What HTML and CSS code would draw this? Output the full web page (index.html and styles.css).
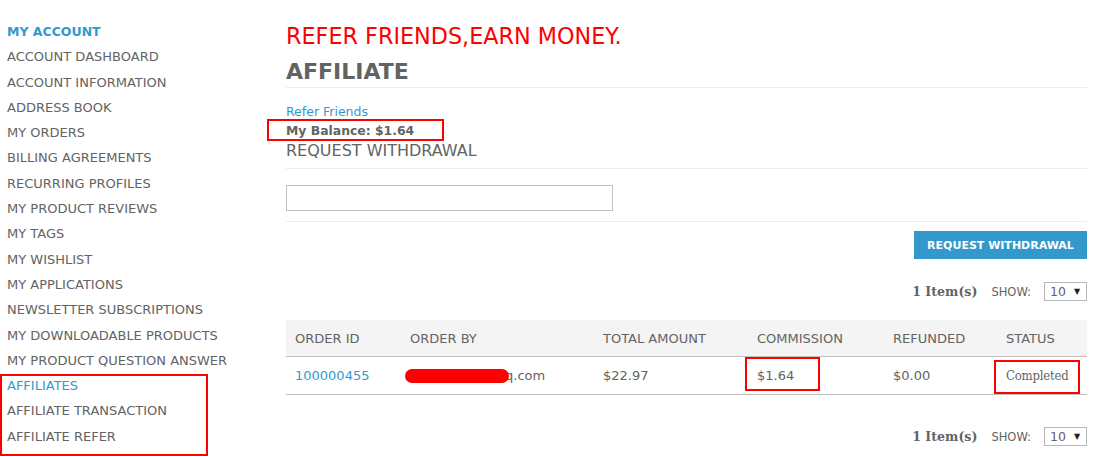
FILE: index.html
```html
<!DOCTYPE html>
<html>
<head>
<meta charset="utf-8">
<link rel="stylesheet" href="styles.css">
</head>
<body>
<div class="page">
  <aside class="sidebar">
    <div class="side-title">MY ACCOUNT</div>
    <ul class="side-nav">
      <li>ACCOUNT DASHBOARD</li>
      <li>ACCOUNT INFORMATION</li>
      <li>ADDRESS BOOK</li>
      <li>MY ORDERS</li>
      <li>BILLING AGREEMENTS</li>
      <li>RECURRING PROFILES</li>
      <li>MY PRODUCT REVIEWS</li>
      <li>MY TAGS</li>
      <li>MY WISHLIST</li>
      <li>MY APPLICATIONS</li>
      <li>NEWSLETTER SUBSCRIPTIONS</li>
      <li>MY DOWNLOADABLE PRODUCTS</li>
      <li>MY PRODUCT QUESTION ANSWER</li>
      <li class="current">AFFILIATES</li>
      <li>AFFILIATE TRANSACTION</li>
      <li>AFFILIATE REFER</li>
    </ul>
  </aside>
  <main class="main">
    <div class="promo">REFER FRIENDS,EARN MONEY.</div>
    <h1 class="page-title">AFFILIATE</h1>
    <a class="refer-link">Refer Friends</a>
    <div class="balance">My Balance: $1.64</div>
    <h2 class="section-title">REQUEST WITHDRAWAL</h2>
    <div class="form-row"><div class="text-input"></div></div>
    <div class="actions"><button class="btn">REQUEST WITHDRAWAL</button></div>
    <div class="toolbar toolbar-top">
      <span class="count">1 Item(s)</span>
      <span class="show">SHOW:</span>
      <span class="limiter">10 <span class="arrow">▼</span></span>
    </div>
    <table class="data">
      <colgroup>
        <col class="c1"><col class="c2"><col class="c3"><col class="c4"><col class="c5"><col class="c6">
      </colgroup>
      <thead>
        <tr><th>ORDER ID</th><th>ORDER BY</th><th>TOTAL AMOUNT</th><th>COMMISSION</th><th>REFUNDED</th><th>STATUS</th></tr>
      </thead>
      <tbody>
        <tr>
          <td><a class="link">100000455</a></td>
          <td class="email"><span class="redact"></span>q.com</td>
          <td>$22.97</td>
          <td>$1.64</td>
          <td>$0.00</td>
          <td class="status">Completed</td>
        </tr>
      </tbody>
    </table>
    <div class="toolbar toolbar-bottom">
      <span class="count">1 Item(s)</span>
      <span class="show">SHOW:</span>
      <span class="limiter">10 <span class="arrow">▼</span></span>
    </div>
  </main>
  <div class="mark mark-side"></div>
  <div class="mark mark-balance"></div>
  <div class="mark mark-commission"></div>
  <div class="mark mark-status"></div>
</div>
</body>
</html>
```

FILE: styles.css
```css
html, body {
  margin: 0;
  padding: 0;
  background: #ffffff;
}
body {
  font-family: "DejaVu Sans", Verdana, sans-serif;
  color: #636363;
  font-size: 13px;
}
.page {
  position: relative;
  display: flex;
  width: 1102px;
  height: 457px;
  overflow: hidden;
}
.sidebar {
  width: 279px;
  padding-left: 7px;
  padding-top: 19px;
  flex: none;
}
.side-title {
  font-weight: bold;
  font-size: 12.5px;
  color: #3399cc;
  line-height: 25.3px;
}
.side-nav {
  list-style: none;
  margin: 0;
  padding: 0;
}
.side-nav li {
  line-height: 25.3px;
  font-size: 13px;
  color: #636363;
  white-space: nowrap;
}
.side-nav li.current {
  color: #3399cc;
}
.main {
  width: 801px;
  flex: none;
  padding-top: 22px;
}
.promo {
  font-size: 22.3px;
  line-height: 28px;
  color: #ff0000;
  white-space: nowrap;
}
.page-title {
  margin: 8px 0 0;
  font-size: 22px;
  font-weight: bold;
  line-height: 28px;
  padding-bottom: 1px;
  border-bottom: 1px solid #ededed;
  color: #636363;
}
.refer-link {
  display: block;
  margin-top: 14px;
  line-height: 19px;
  font-size: 12.5px;
  color: #3399cc;
}
.balance {
  font-weight: bold;
  font-size: 12.4px;
  line-height: 19px;
}
.section-title {
  margin: 0;
  font-size: 16px;
  font-weight: normal;
  line-height: 22px;
  padding-bottom: 6px;
  border-bottom: 1px solid #ededed;
}
.form-row {
  padding-top: 16px;
  padding-bottom: 10px;
  border-bottom: 1px solid #ededed;
}
.text-input {
  width: 327px;
  height: 26px;
  box-sizing: border-box;
  border: 1px solid #c0c0c0;
  background: #fff;
}
.actions {
  display: flex;
  justify-content: flex-end;
  padding-top: 9px;
}
.btn {
  width: 173px;
  height: 28px;
  border: 0;
  background: #3399cc;
  color: #ffffff;
  font-family: "DejaVu Sans", Verdana, sans-serif;
  font-weight: bold;
  font-size: 11px;
  padding: 0;
}
.toolbar {
  display: flex;
  justify-content: flex-end;
  align-items: center;
  height: 19px;
}
.toolbar-top {
  margin-top: 23px;
}
.toolbar-bottom {
  margin-top: 32px;
}
.count {
  font-family: "DejaVu Serif", Georgia, serif;
  font-weight: bold;
  font-size: 12.6px;
  margin-right: 14px;
}
.show {
  font-size: 11.5px;
  margin-right: 13px;
}
.limiter {
  width: 43px;
  height: 19px;
  box-sizing: border-box;
  border: 1px solid #b8b8b8;
  font-size: 12.5px;
  line-height: 17px;
  padding-left: 5px;
  color: #636363;
  display: flex;
  align-items: center;
}
.arrow {
  font-size: 8px;
  color: #222;
  margin-left: 8px;
}
.data {
  margin-top: 19px;
  width: 801px;
  border-collapse: collapse;
  table-layout: fixed;
}
.c1 { width: 115px; }
.c2 { width: 193px; }
.c3 { width: 154px; }
.c4 { width: 136px; }
.c5 { width: 113px; }
.c6 { width: 90px; }
.data th {
  background: #f4f4f4;
  height: 36px;
  padding: 0 0 0 9px;
  text-align: left;
  font-weight: normal;
  font-size: 13px;
  border-bottom: 1px solid #c0c0c0;
  white-space: nowrap;
}
.data td {
  height: 37px;
  padding: 0 0 0 9px;
  font-size: 13px;
  border-bottom: 1px solid #c0c0c0;
  white-space: nowrap;
}
.data td.email {
  padding-left: 4px;
}
.redact {
  display: inline-block;
  vertical-align: middle;
  width: 104px;
  height: 14px;
  border-radius: 7px;
  background: #ff0000;
  margin-right: -4px;
  position: relative;
}
.link {
  color: #3399cc;
}
.status {
  font-family: "DejaVu Serif Condensed", "DejaVu Serif", Georgia, serif;
  font-stretch: condensed;
  font-size: 13px;
  letter-spacing: -0.2px;
}
.mark {
  position: absolute;
  border: 2px solid #ff0000;
  box-sizing: border-box;
}
.mark-side {
  left: 0;
  top: 374px;
  width: 208px;
  height: 82px;
}
.mark-balance {
  left: 267px;
  top: 119px;
  width: 177px;
  height: 22px;
}
.mark-commission {
  left: 745px;
  top: 357px;
  width: 75px;
  height: 34px;
}
.mark-status {
  left: 994px;
  top: 360px;
  width: 86px;
  height: 34px;
}
```
